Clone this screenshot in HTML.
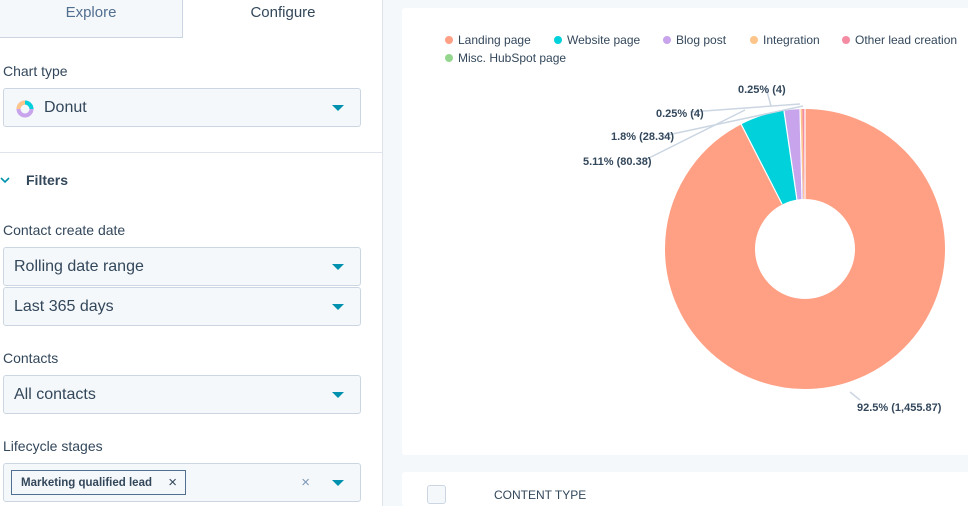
<!DOCTYPE html>
<html style="overflow:hidden"><head><style>
html,body{overflow:hidden}
body{margin:0;width:968px;height:506px;overflow:hidden;background:#f5f8fa;font-family:"Liberation Sans",sans-serif;color:#33475b;position:relative}
.left{position:absolute;left:0;top:0;width:382px;height:506px;background:#fff;border-right:1px solid #dfe3eb}
.tab{position:absolute;top:0;height:37px;line-height:26px;font-size:15px;text-align:center}
.lbl{position:absolute;left:3px;font-size:14px}
.sel{position:absolute;left:3px;width:356px;height:37px;background:#f5f8fa;border:1px solid #cbd6e2;border-radius:3px;font-size:16px;line-height:37px;box-sizing:content-box}
.sel .t{position:absolute;left:10px}
.caret{position:absolute;right:16px;top:16px;width:0;height:0;border-left:6px solid transparent;border-right:6px solid transparent;border-top:6px solid #0091ae}
.card{position:absolute;left:402px;background:#fff;border-radius:3px;width:600px}
.leg{position:absolute;font-size:12px;color:#33475b}
.leg i{display:inline-block;width:8px;height:8px;border-radius:50%;margin-right:5px;vertical-align:0}
.pl{position:absolute;font-size:11px;font-weight:bold;color:#33475b}
</style></head><body>
<div class="left">
<div class="tab" style="left:0;width:182px;background:#f5f8fa;border-right:1px solid #cbd6e2;border-bottom:1px solid #cbd6e2;color:#516f90">Explore</div>
<div class="tab" style="left:184px;width:198px">Configure</div>
<div class="lbl" style="top:63px">Chart type</div>
<div class="sel" style="top:88px"><svg style="position:absolute;left:12px;top:11px" width="18" height="18" viewBox="0 0 18 18"><circle cx="9" cy="9" r="6.5" fill="none" stroke="#c7a4ec" stroke-width="4"/><path d="M9 2.5A6.5 6.5 0 0 0 2.5 9" fill="none" stroke="#fdc58a" stroke-width="4"/><path d="M9 2.5A6.5 6.5 0 0 1 15.5 9" fill="none" stroke="#00d1da" stroke-width="4"/></svg><span class="t" style="left:40px">Donut</span><div class="caret"></div></div>
<div style="position:absolute;left:0;top:152px;width:382px;border-top:1px solid #dfe3eb"></div>
<svg style="position:absolute;left:0;top:176px" width="10" height="8"><path d="M1 2l4 4 4-4" fill="none" stroke="#0091ae" stroke-width="1.6"/></svg>
<div style="position:absolute;left:26px;top:172px;font-size:14px;font-weight:bold">Filters</div>
<div class="lbl" style="top:222px">Contact create date</div>
<div class="sel" style="top:247px"><span class="t">Rolling date range</span><div class="caret"></div></div>
<div class="sel" style="top:287px"><span class="t">Last 365 days</span><div class="caret"></div></div>
<div class="lbl" style="top:350px">Contacts</div>
<div class="sel" style="top:375px"><span class="t">All contacts</span><div class="caret"></div></div>
<div class="lbl" style="top:438px">Lifecycle stages</div>
<div class="sel" style="top:463px"><div style="position:absolute;left:7px;top:6px;height:25px;line-height:24px;width:175px;border:1px solid #516f90;background:#f5f8fa;font-size:11.5px;font-weight:bold;box-sizing:border-box;padding-left:9px;white-space:nowrap">Marketing qualified lead<span style="position:absolute;right:8px;font-weight:normal;font-size:15px">×</span></div><span style="position:absolute;right:50px;color:#7c98b6;font-size:15px">×</span><div class="caret"></div></div>
</div>
<div class="card" style="top:8px;height:447px"></div>
<div class="card" style="top:472px;height:34px"><div style="position:absolute;left:25px;top:13px;width:17px;height:17px;border:1px solid #cbd6e2;border-radius:3px;background:#f5f8fa"></div><div style="position:absolute;left:92px;top:16px;font-size:12px">CONTENT TYPE</div></div>
<div class="leg" style="left:445px;top:33px"><i style="background:#ff9f84"></i>Landing page</div>
<div class="leg" style="left:554px;top:33px"><i style="background:#00d1da"></i>Website page</div>
<div class="leg" style="left:663px;top:33px"><i style="background:#c7a4ec"></i>Blog post</div>
<div class="leg" style="left:750px;top:33px"><i style="background:#fdc58a"></i>Integration</div>
<div class="leg" style="left:842px;top:33px"><i style="background:#f48ba2"></i>Other lead creation</div>
<div class="leg" style="left:445px;top:51px"><i style="background:#95d68e"></i>Misc. HubSpot page</div>
<svg style="position:absolute;left:0;top:0" width="968" height="506">
<g transform="rotate(-90 805 249)" fill="none" stroke-width="90">
<circle cx="805" cy="249" r="95" stroke="#ff9f84" stroke-dasharray="552.1 597" />
<circle cx="805" cy="249" r="95" stroke="#00d1da" stroke-dasharray="0 552.1 30.5 597"/>
<circle cx="805" cy="249" r="95" stroke="#c7a4ec" stroke-dasharray="0 582.6 10.7 597"/>
<circle cx="805" cy="249" r="95" stroke="#fdc58a" stroke-dasharray="0 593.3 1.5 597"/>
<circle cx="805" cy="249" r="95" stroke="#f48ba2" stroke-dasharray="0 594.8 1.5 597"/>
</g>
<g stroke="#fff" stroke-width="1.2">
<line x1="805" y1="199" x2="805" y2="109"/><line x1="782" y1="204" x2="741" y2="124"/><line x1="797" y1="200" x2="784" y2="111"/><line x1="802" y1="199" x2="800" y2="109"/>
</g>
<g stroke="#cbd6e2" stroke-width="1.5" fill="none">
<path d="M766 88l5 18"/><path d="M690 112l110-8"/><path d="M663 136l140-30"/><path d="M645 160l100-50"/><path d="M860 400l-10 -8"/>
</g>
</svg>
<div class="pl" style="left:738px;top:84px">0.25% (4)</div>
<div class="pl" style="left:656px;top:108px">0.25% (4)</div>
<div class="pl" style="left:611px;top:131px">1.8% (28.34)</div>
<div class="pl" style="left:583px;top:156px">5.11% (80.38)</div>
<div class="pl" style="left:857px;top:402px">92.5% (1,455.87)</div>
</body></html>
